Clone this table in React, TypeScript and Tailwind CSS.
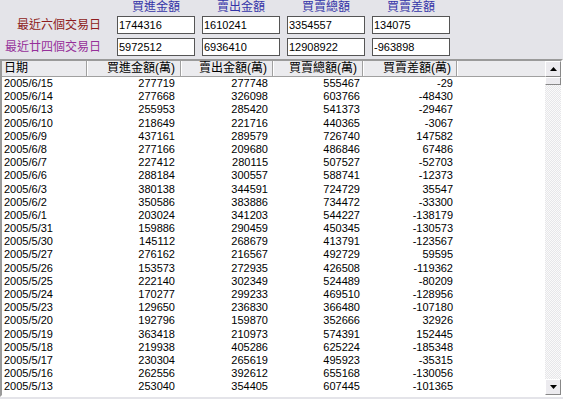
const ROWS: [string, number, number, number, number][] = [
  ["2005/6/15", 277719, 277748, 555467, -29],
  ["2005/6/14", 277668, 326098, 603766, -48430],
  ["2005/6/13", 255953, 285420, 541373, -29467],
  ["2005/6/10", 218649, 221716, 440365, -3067],
  ["2005/6/9", 437161, 289579, 726740, 147582],
  ["2005/6/8", 277166, 209680, 486846, 67486],
  ["2005/6/7", 227412, 280115, 507527, -52703],
  ["2005/6/6", 288184, 300557, 588741, -12373],
  ["2005/6/3", 380138, 344591, 724729, 35547],
  ["2005/6/2", 350586, 383886, 734472, -33300],
  ["2005/6/1", 203024, 341203, 544227, -138179],
  ["2005/5/31", 159886, 290459, 450345, -130573],
  ["2005/5/30", 145112, 268679, 413791, -123567],
  ["2005/5/27", 276162, 216567, 492729, 59595],
  ["2005/5/26", 153573, 272935, 426508, -119362],
  ["2005/5/25", 222140, 302349, 524489, -80209],
  ["2005/5/24", 170277, 299233, 469510, -128956],
  ["2005/5/23", 129650, 236830, 366480, -107180],
  ["2005/5/20", 192796, 159870, 352666, 32926],
  ["2005/5/19", 363418, 210973, 574391, 152445],
  ["2005/5/18", 219938, 405286, 625224, -185348],
  ["2005/5/17", 230304, 265619, 495923, -35315],
  ["2005/5/16", 262556, 392612, 655168, -130056],
  ["2005/5/13", 253040, 354405, 607445, -101365],
];

const CJK = "font-['Liberation_Sans','Noto_Sans_CJK_TC',sans-serif]";

const TOP_HEADS = ["買進金額", "賣出金額", "買賣總額", "買賣差額"];
const SIX = ["1744316", "1610241", "3354557", "134075"];
const TWENTY_FOUR = ["5972512", "6936410", "12908922", "-963898"];

function Box({ value }: { value: string }) {
  return (
    <div className="w-[78px] h-[18px] bg-white border border-[#555] pl-[1px] text-[11px] leading-[16px] text-black">
      {value}
    </div>
  );
}

function HeadCell({ children, w, right }: { children?: React.ReactNode; w: string; right?: boolean }) {
  return (
    <div
      className={`${w} h-full flex items-center border-r border-[#a0a0a0] shadow-[1px_0_0_#fff] ${
        right ? "justify-end pr-[5px]" : "pl-[2px]"
      }`}
    >
      {children}
    </div>
  );
}

function Arrow({ up }: { up?: boolean }) {
  return (
    <div className="w-[16px] h-[16px] bg-[#ecebef] border border-t-white border-l-white border-r-[#888] border-b-[#888] flex items-center justify-center">
      <svg width="7" height="4" viewBox="0 0 7 4">
        <path d={up ? "M0 4 L3.5 0 L7 4 Z" : "M0 0 L3.5 4 L7 0 Z"} fill="#000" />
      </svg>
    </div>
  );
}

export default function App() {
  return (
    <div className={`w-[563px] h-[399px] bg-[#e4e4e9] overflow-hidden flex flex-col ${CJK}`}>
      {/* Summary boxes */}
      <div className="h-[59px] flex flex-col">
        <div className="h-[16px] flex pl-[117px] gap-[7px]">
          {TOP_HEADS.map((h) => (
            <div key={h} className="w-[78px] text-center text-[12px] leading-[15px] text-[#3434a8]">
              {h}
            </div>
          ))}
        </div>
        <div className="flex items-center h-[18px]">
          <div className="w-[117px] pr-[16px] text-right text-[12px] text-[#8e1c20]">最近六個交易日</div>
          <div className="flex gap-[7px]">
            {SIX.map((v, i) => (
              <Box key={i} value={v} />
            ))}
          </div>
        </div>
        <div className="flex items-center h-[18px] mt-[4px]">
          <div className="w-[117px] pr-[16px] text-right text-[12px] text-[#96309a]">最近廿四個交易日</div>
          <div className="flex gap-[7px]">
            {TWENTY_FOUR.map((v, i) => (
              <Box key={i} value={v} />
            ))}
          </div>
        </div>
      </div>

      {/* List */}
      <div className="w-[563px] h-[338px] border-2 border-t-[#9a9a9a] border-l-[#9a9a9a] border-r-white border-b-white shadow-[inset_1px_1px_0_#404040] flex">
        <div className="flex-1 flex flex-col bg-white text-[11px] text-black">
          <div className="h-[16px] shrink-0 flex bg-[#ebebee] border-b border-[#a0a0a0] text-[12px] leading-[15px]">
            <HeadCell w="w-[85px]">日期</HeadCell>
            <HeadCell w="w-[94px]" right>買進金額(萬)</HeadCell>
            <HeadCell w="w-[92px]" right>賣出金額(萬)</HeadCell>
            <HeadCell w="w-[90px]" right>買賣總額(萬)</HeadCell>
            <HeadCell w="w-[94px]" right>買賣差額(萬)</HeadCell>
            <div className="flex-1" />
          </div>
          <div className="flex flex-col">
            {ROWS.map((r) => (
              <div key={r[0]} className="h-[13.2px] flex leading-[13px]">
                <div className="w-[85px] pl-[2px]">{r[0]}</div>
                <div className="w-[94px] text-right pr-[6px]">{r[1]}</div>
                <div className="w-[92px] text-right pr-[5px]">{r[2]}</div>
                <div className="w-[90px] text-right pr-[3px]">{r[3]}</div>
                <div className="w-[94px] text-right pr-[4px]">{r[4]}</div>
              </div>
            ))}
          </div>
        </div>
        {/* Scrollbar */}
        <div className="w-[16px] flex flex-col bg-[#f1f1f3] bg-[repeating-conic-gradient(#e6e6e9_0_25%,#fafafa_0_50%)] bg-[length:2px_2px]">
          <Arrow up />
          <div className="h-[8px] bg-[#ecebef] border border-t-white border-l-white border-r-[#888] border-b-[#888]" />
          <div className="flex-1" />
          <Arrow />
        </div>
      </div>
    </div>
  );
}
